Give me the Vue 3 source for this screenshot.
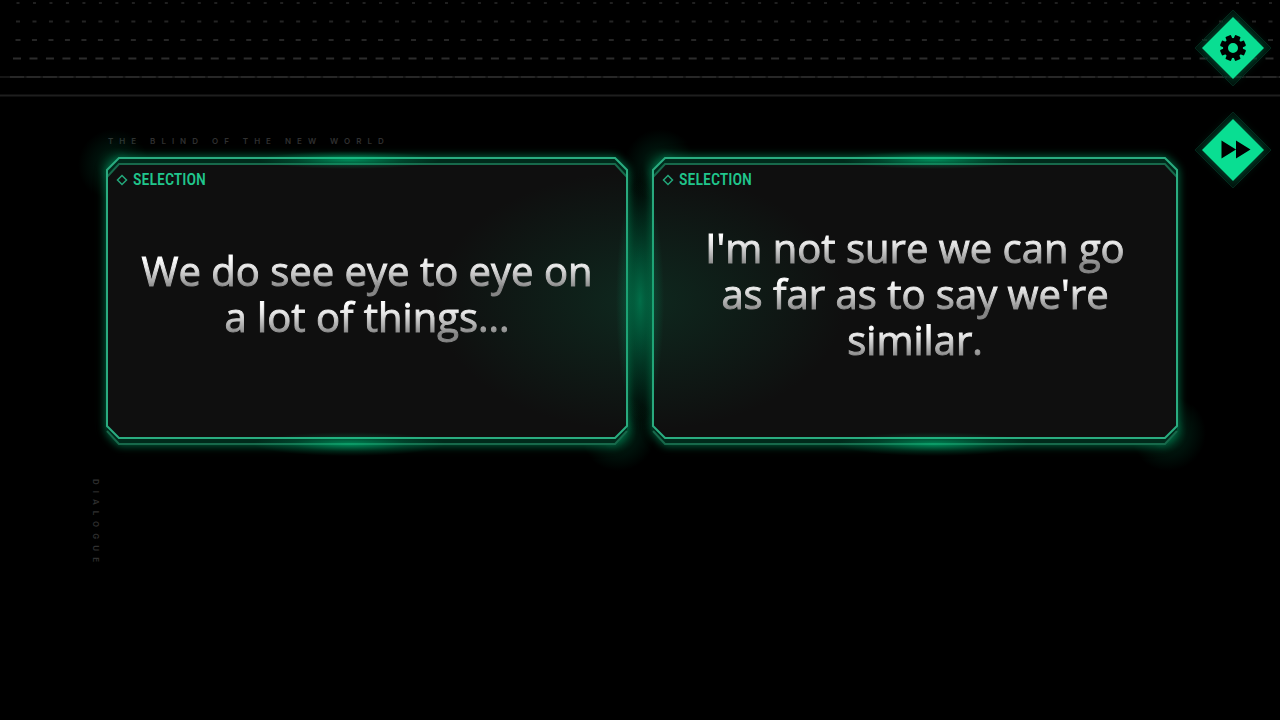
<script setup>
import { ref } from 'vue'

const choices = [
  { id: 'agree', text: 'We do see eye to eye on a lot of things...' },
  { id: 'differ', text: "I'm not sure we can go as far as to say we're similar." },
]
const rows = [
  { y: 3, dash: '3 13.48', start: 16.5, color: '#202020' },
  { y: 21.5, dash: '4 12.48', start: 16, color: '#242424' },
  { y: 40, dash: '5 11.48', start: 15.5, color: '#262626' },
  { y: 58.5, dash: '8 8.48', start: 13, color: '#2c2c2c' },
  { y: 77, dash: '14 2.48', start: 10, color: '#272727' },
]
const teeth = [0, 45, 90, 135, 180, 225, 270, 315]
const selected = ref(null)
</script>

<template>
  <div class="screen">
    <svg class="pattern" aria-hidden="true">
      <line x1="0" y1="77" x2="100%" y2="77" stroke="#161616" stroke-width="2" />
      <line
        v-for="r in rows" :key="r.y" :x1="r.start" :y1="r.y" x2="100%" :y2="r.y"
        :stroke="r.color" stroke-width="2" :stroke-dasharray="r.dash"
      />
      <line x1="0" y1="95.5" x2="100%" y2="95.5" stroke="#1e1e1e" stroke-width="2" />
    </svg>

    <main class="stage">
      <p class="tagline">THE BLIND OF THE NEW WORLD</p>
      <div class="choices">
        <button v-for="c in choices" :key="c.id" class="choice" type="button" @click="selected = c.id">
          <svg class="frame" viewBox="0 0 524 288" preserveAspectRatio="none" aria-hidden="true">
            <path class="edge-fill" d="M13 1H511L523 13V275L511 287H13L1 275V13Z" />
            <path class="body-fill" d="M13 8H511L523 20V270L511 281H13L1 270V20Z" />
            <path class="inner" d="M1 20L13 7H511L523 20" />
            <path class="inner" d="M1 274L13 287H511L523 274" />
            <path class="outer" d="M13 1H511L523 13V269L511 281H13L1 269V13Z" />
          </svg>
          <span class="label">
            <svg class="mark" viewBox="0 0 12 12" aria-hidden="true"><path d="M6 1.5L10.5 6L6 10.5L1.5 6Z" /></svg>
            SELECTION
          </span>
          <span class="message"><span><span class="ink">{{ c.text }}</span></span></span>
        </button>
        <span class="beam"></span>
      </div>
      <p class="side-word">DIALOGUE</p>
    </main>

    <nav class="tools" aria-label="Game controls">
      <button class="tool" type="button" aria-label="Settings">
        <svg viewBox="0 0 80 80" aria-hidden="true">
          <path class="halo" d="M40 2L78 40L40 78L2 40Z" />
          <path class="face" d="M40 9L71 40L40 71L9 40Z" />
          <rect v-for="a in teeth" :key="a" x="37" y="27" width="6" height="6" rx="1" :transform="`rotate(${a + 22.5} 40 40)`" />
          <circle class="ring" cx="40" cy="40" r="7.5" />
        </svg>
      </button>
      <button class="tool" type="button" aria-label="Fast forward">
        <svg viewBox="0 0 80 80" aria-hidden="true">
          <path class="halo" d="M40 2L78 40L40 78L2 40Z" />
          <path class="face" d="M40 9L71 40L40 71L9 40Z" />
          <path d="M28.500 30.500L43 39.500L28.500 48.500ZM43 30.500L57.500 39.500L43 48.500Z" />
        </svg>
      </button>
    </nav>
  </div>
</template>

<style>
html, body { background: #000; }
</style>

<style scoped>
.screen {
  position: relative;
  display: flex;
  min-height: 100vh;
  background: #000;
  overflow: hidden;
  font-family: "Open Sans", "Noto Sans", sans-serif;
}
.pattern {
  position: absolute;
  top: 0;
  left: 0;
  width: 100%;
  height: 98px;
}
.stage {
  position: relative;
  flex: 1;
  min-width: 0;
  padding: 135px 0 40px 90px;
}
.tagline, .side-word {
  margin: 0;
  color: #303030;
  font-family: Inter, sans-serif;
  font-size: 8px;
  font-weight: 600;
  line-height: 12px;
  letter-spacing: 6px;
}
.tagline { margin: 0 0 10px 18px; }
.side-word {
  margin-top: 34px;
  writing-mode: vertical-rl;
}
.choices {
  position: relative;
  display: grid;
  grid-template-columns: 522fr 526fr;
  gap: 24px;
  margin-left: 16px;
}
.choice {
  --peak: 47%;
  position: relative;
  display: flex;
  flex-direction: column;
  min-height: 288px;
  padding: 12px 30px 48px;
  border: 0;
  background: none;
  color: inherit;
  font: inherit;
  cursor: pointer;
}
.choice:nth-child(2) { --peak: 53%; }
.choice::before, .choice::after {
  content: "";
  position: absolute;
  inset: -36px;
  pointer-events: none;
}
.choice::before {
  background:
    radial-gradient(circle 36px at 44px 44px, rgba(0, 190, 120, .3), rgba(0, 190, 120, .09) 50%, transparent),
    radial-gradient(circle 38px at calc(100% - 46px) calc(100% - 48px), rgba(0, 190, 120, .38), rgba(0, 190, 120, .11) 50%, transparent);
}
.choice::after {
  background:
    radial-gradient(ellipse 90px 9px at var(--peak) 39px, rgba(0, 200, 128, .6), rgba(0, 200, 128, .17) 60%, transparent),
    radial-gradient(ellipse 96px 12px at var(--peak) calc(100% - 37px), rgba(0, 200, 128, .55), rgba(0, 200, 128, .15) 60%, transparent);
}
.frame {
  position: absolute;
  inset: 0;
  width: 100%;
  height: 100%;
  overflow: visible;
  filter: drop-shadow(0 0 4px rgba(0, 160, 100, .5)) drop-shadow(0 0 5px rgba(0, 140, 88, .3));
}
.edge-fill { fill: #002a1b; }
.body-fill { fill: #0f0f0f; }
.inner, .outer { fill: none; vector-effect: non-scaling-stroke; }
.inner { stroke: #17694b; stroke-width: 2; }
.outer { stroke: #2aac80; stroke-width: 2; }
.label {
  position: relative;
  display: flex;
  align-items: center;
  gap: 5px;
  margin-left: -20px;
  color: #20c68c;
  font-family: "Roboto Condensed", Roboto, sans-serif;
  font-size: 16px;
  font-weight: 500;
  line-height: 22px;
}
.mark { width: 12px; height: 12px; }
.mark path { fill: none; stroke: #23a87b; stroke-width: 1.5; }
.message {
  position: relative;
  z-index: 1;
  display: flex;
  flex: 1;
  align-items: center;
  justify-content: center;
  font-size: 40px;
  line-height: 46px;
  text-align: center;
}
.ink {
  background: linear-gradient(#fff 28%, #e4e4e4 45%, #858585 82%);
  -webkit-box-decoration-break: clone;
  box-decoration-break: clone;
  -webkit-background-clip: text;
  background-clip: text;
  -webkit-text-stroke: 1px transparent;
  color: transparent;
}
.beam {
  position: absolute;
  top: 0;
  bottom: 0;
  left: calc(50% - 214px);
  width: 424px;
  background:
    radial-gradient(ellipse 24px 120px at center, rgba(0, 190, 125, .5), rgba(0, 190, 125, .2) 55%, transparent),
    radial-gradient(ellipse 206px 130px at center, rgba(13, 105, 70, .28), transparent);
  pointer-events: none;
}
.tools {
  position: relative;
  display: flex;
  flex-direction: column;
  align-items: center;
  gap: 22px;
  width: 102px;
  box-sizing: border-box;
  padding: 8px 0 0 8px;
}
.tool {
  width: 80px;
  height: 80px;
  padding: 0;
  border: 0;
  background: none;
  cursor: pointer;
}
.tool svg {
  display: block;
  width: 80px;
  height: 80px;
  overflow: visible;
}
.halo { fill: rgba(0, 40, 26, .45); stroke: #04251a; stroke-width: 1; }
.face { fill: #09de92; filter: drop-shadow(0 0 5px rgba(0, 150, 95, .55)); }
.ring { fill: none; stroke: #000; stroke-width: 5; }
</style>
